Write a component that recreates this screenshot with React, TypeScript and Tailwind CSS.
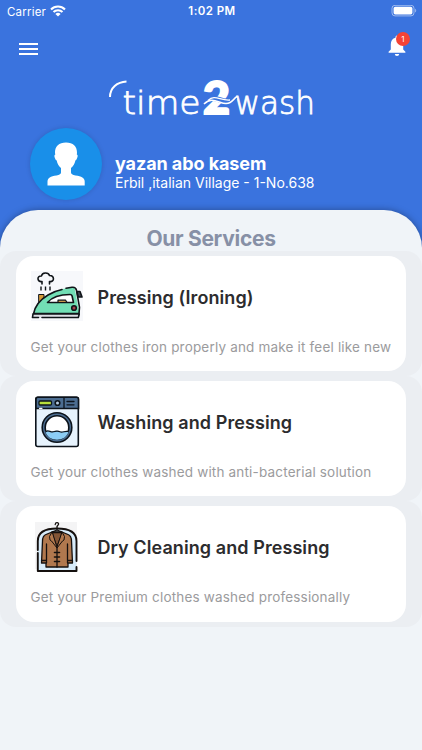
import React from 'react';

const WifiIcon: React.FC = () => (
  <svg className="w-4 h-3" viewBox="0 0 16 12" fill="none" stroke="white" strokeWidth="2.1">
    <path d="M1 4.4a10 10 0 0 1 14 0" />
    <path d="M3.5 7.1a6.4 6.4 0 0 1 9 0" />
    <path d="M8 11.6 5.4 9a3.7 3.7 0 0 1 5.2 0z" fill="white" stroke="none" />
  </svg>
);

const BatteryIcon: React.FC = () => (
  <svg className="w-[26px] h-3" viewBox="0 0 26 12">
    <rect x="1" y="0.3" width="22" height="10.6" rx="3" fill="none" stroke="white" strokeOpacity="0.5" />
    <rect x="2.6" y="1.8" width="18.8" height="7.6" rx="1.7" fill="white" />
    <path d="M24.1 3.7c1.5.7 1.5 3.1 0 3.8z" fill="white" fillOpacity="0.5" />
  </svg>
);

const BellIcon: React.FC = () => (
  <svg className="w-[18px] h-[21px]" viewBox="0 0 18 21" fill="white">
    <path d="M9 21a2.2 2.2 0 0 0 2.2-2.1H6.8A2.2 2.2 0 0 0 9 21zM15.2 14.6V9.2c0-3.3-1.7-5.8-4.7-6.5V2A1.5 1.5 0 0 0 7.5 2v.7C4.5 3.4 2.8 5.9 2.8 9.2v5.4L.6 16.8v1h16.8v-1z" />
  </svg>
);

const Logo: React.FC = () => (
  <svg className="w-[212px] h-[58px] overflow-visible" viewBox="105 68 212 58" fill="white">
    <path d="M110 97C110 88 117 82 126.5 81.500" fill="none" stroke="white" strokeWidth="2" />
    <text x="122.500" y="113.500" fontSize="32" textLength="78" lengthAdjust="spacingAndGlyphs" className="font-['DejaVu_Sans_Light','DejaVu_Sans',sans-serif] font-extralight" stroke="white" strokeWidth="0.8">time</text>
    <text x="203" y="113.500" fontSize="45" textLength="27" lengthAdjust="spacingAndGlyphs" className="font-[Lato,sans-serif] font-black" stroke="white" strokeWidth="2">2</text>
    <text x="234.500" y="113.500" fontSize="32" textLength="80.500" lengthAdjust="spacingAndGlyphs" className="font-['DejaVu_Sans_Light','DejaVu_Sans',sans-serif] font-extralight" stroke="white" strokeWidth="0.8">wash</text>
    <path d="M204 102.500C212 94 219 101 226 101.500S233 98 236 96.500" fill="none" stroke="#3a73de" strokeWidth="5.500" />
    <path d="M204 104C212 96 219 103.500 226 103.500S233 98.500 237 96.500" fill="none" stroke="white" strokeWidth="1.600" />
    <path d="M208 100.500C215 94 220 101 230 100" fill="none" stroke="white" strokeWidth="1.300" />
  </svg>
);

const AvatarIcon: React.FC = () => (
  <svg className="w-[38px] h-[44px]" viewBox="0 0 38 44" fill="white">
    <path d="M19 .5c7 0 11.200 4 11 10.500l-.2 1.600c1.200.3 1.200 2-.1 4.400-.5 1-.9 1.300-1.300 1.500-.7 3.300-2 5.600-4.400 7.500v4.600c0 1.700 1.400 2.300 4.500 2.800 6 .8 9.200 2.300 9.200 6.100v4H.5v-4c0-3.800 3-5.300 9-6.100 3.200-.5 4.500-1.100 4.500-2.800V26c-2.300-1.900-3.700-4.200-4.300-7.500-.5-.2-.9-.5-1.400-1.500-1.200-2.400-1.200-4.100 0-4.400L8 11C7.800 4.500 12 .5 19 .5z" />
  </svg>
);

const IronIcon: React.FC = () => (
  <svg className="w-[52px] h-[50px]" viewBox="0 0 52 50" fill="none" stroke="#101418" strokeWidth="1.600" strokeLinecap="round" strokeLinejoin="round">
    <rect width="52" height="50" fill="#f7f8fb" stroke="none" />
    <path d="M11 13V10.500C6 11.500 5.500 4.500 10.500 5 11 1 17.500 1 18.500 4.500 23.500 4 24 11.500 18.500 10.500V13" />
    <path d="M10 15.500v4M14.500 15.500v4M19 15.500v4" strokeLinecap="butt" strokeWidth="1.400" />
    <path d="M8 23.500h5v4.500l-5 4z" fill="#d59a38" strokeWidth="1" />
    <path d="M46 20.500h3l2 5.500h-4z" fill="#454b56" />
    <path d="M2.500 43C4 34 9.500 28.500 17 24c8-4.500 17-7.500 26.500-7.500l5 26.500z" fill="#72dfb5" stroke="none" />
    <path d="M2.500 43C4 34 9.500 28.500 17 24c4.500-2.700 9-4.500 14-5.500M35 17.200l6-.9c2.500-.3 4 .7 4.500 3l3 17-.5 6.200H2.500" />
    <path d="M16.500 31.500c5-6 11.500-8 22.500-8 1.500 0 2 .7 2.200 2l1.300 6z" fill="white" />
    <path d="M27 31.500v-2.300h7.500l1.500 2.300z" fill="#c99448" strokeWidth="1.200" />
    <circle cx="43" cy="37" r="2.300" fill="#a7424b" />
    <path d="M2 43h46l-1 3.500H1.500z" fill="#dedee5" stroke="none" />
    <path d="M2 43h46.300l-1 3.500H11M2 43l-.5 3.500h6" />
  </svg>
);

const WasherIcon: React.FC = () => (
  <svg className="w-[52px] h-[52px]" viewBox="0 0 52 52" fill="none" stroke="#0c131b" strokeWidth="1.600" strokeLinecap="round">
    <rect x="4.800" y="1.300" width="42.500" height="49.200" rx="2" fill="#e7f3fd" />
    <path d="M5 12.500V3.300q0-2 2-2h38.500q2 0 2 2v9.200z" fill="#4c6d91" />
    <path d="M33 2v10M36 5.500h7M36 8.800h7" strokeWidth="1.300" />
    <rect x="8" y="5" width="12.500" height="4" rx="1" fill="#b7df3c" strokeWidth="1.300" />
    <circle cx="26.500" cy="7" r="2.300" fill="#b5cbe2" />
    <circle cx="26" cy="31.500" r="14.800" fill="#4c6d91" />
    <circle cx="26" cy="31.500" r="11.800" fill="white" />
    <path d="M14.500 35.500c3-2 4 1 7 0s5-1 7 0 5-1 9 0C35 46.500 17 46.500 14.500 35.500z" fill="#8ccdf5" stroke="none" />
    <path d="M15 35.500c2.500-2 4.500 1 7 .3s4.500-1.300 7 0 5-1.300 8-.3" strokeWidth="1.200" />
    <path d="M8.500 12.300h2.500" stroke="white" strokeWidth="1.200" />
  </svg>
);

const CoatIcon: React.FC = () => (
  <svg className="w-[52px] h-[52px]" viewBox="0 0 52 52" fill="none" stroke="#15100e" strokeWidth="1.300" strokeLinecap="round" strokeLinejoin="round">
    <rect x="4" y="1" width="42" height="47" fill="#f4f4f5" stroke="none" />
    <path d="M6.800 50V20C6.800 11 14 7.500 26 7.500S45.500 11 45.500 20v30z" fill="#d7ebf9" stroke="none" />
    <path d="M6.800 32V50h38.700v-4M45.500 40V20C45.500 11 38 7.500 26 7.500S6.800 11 6.800 20v9" strokeWidth="1.900" />
    <path d="M21 11 15 13.500q-3.500 1.500-3.500 6.500L10.500 42h4.500v4h22v-4h4.500L40.500 20q0-5-3.500-6.500L31 11z" fill="#b0784e" />
    <path d="M15.500 42V23M36.500 42V23M10.500 39.500h5M36.500 39.500h5" />
    <path d="M21.500 11.500v3l4.500 11 4.500-11v-3z" fill="#835536" />
    <path d="m21 11-2.500 4.500.5 3.500 1.500 1 5.500 7 5.500-7 1.500-1 .5-3.500L31 11l-5 15z" fill="#b0784e" strokeWidth="1" />
    <path d="M26 27v19" />
    <path d="M23.500 31.500h5M23.500 36h5M23.500 40.500h5" strokeWidth="1.600" />
    <path d="M24.200 3.500q.3-2 2-1.800 2.300.5.800 2.500l-1 1.300V9l-5 2.200M26 9l5 2.200" />
  </svg>
);

const services = [
  { title: 'Pressing (Ironing)', desc: 'Get your clothes iron properly and make it feel like new', icon: <IronIcon /> },
  { title: 'Washing and Pressing', desc: 'Get your clothes washed with anti-bacterial solution', icon: <WasherIcon /> },
  { title: 'Dry Cleaning and Pressing', desc: 'Get your Premium clothes washed professionally', icon: <CoatIcon /> },
];

const App: React.FC = () => {
  return (
    <div className="h-[750px] w-[422px] overflow-hidden bg-[#f0f4f8] font-[Inter,sans-serif]">
      <header className="h-[250px] bg-[#3a73de] text-white">
        <div className="grid h-[22px] grid-cols-3 items-center pl-[7px] pr-[5px]">
          <div className="flex items-center gap-1 text-[11.5px] leading-4 tracking-[0.2px]">
            <span className="pt-px">Carrier</span>
            <WifiIcon />
          </div>
          <span className="text-center text-[11.5px] font-semibold leading-4 tracking-[0.45px]">1:02 PM</span>
          <div className="flex justify-end">
            <BatteryIcon />
          </div>
        </div>

        <div className="flex h-[46px] items-start justify-between pl-[19px] pr-[16px] pt-[13px]">
          <button className="mt-[8px] flex w-[19px] flex-col gap-[3px]" aria-label="Menu">
            <span className="h-[2px] bg-white"></span>
            <span className="h-[2px] bg-white"></span>
            <span className="h-[2px] bg-white"></span>
          </button>
          <button className="relative" aria-label="Notifications">
            <BellIcon />
            <span className="absolute -right-[4px] -top-[3px] flex h-[14px] w-[14px] items-center justify-center rounded-full bg-[#f44336] text-[8px]">1</span>
          </button>
        </div>

        <div className="flex justify-center">
          <Logo />
        </div>

        <div className="mt-[2px] flex items-start pl-[30px]">
          <div className="flex h-[72px] w-[72px] items-center justify-center rounded-full bg-[#198fe9] shadow-[0_0_5px_rgba(0,0,0,0.15)]">
            <AvatarIcon />
          </div>
          <div className="ml-[13px] mt-[25px]">
            <h1 className="text-[18px] font-bold leading-[22px] tracking-[-0.08px]">yazan abo kasem</h1>
            <p className="text-sm leading-4">Erbil ,italian Village - 1-No.638</p>
          </div>
        </div>
      </header>

      <main className="relative -mt-10 h-[540px] rounded-t-[38px] bg-[#f0f4f8] shadow-[0_0_7px_rgba(0,0,0,0.35)]">
        <h2 className="h-[41px] pt-[15px] text-center text-[21px] font-bold leading-7 tracking-[-0.3px] text-[#8790a6]">Our Services</h2>
        {services.map((item) => (
          <section key={item.title} className="h-[125.200px] rounded-2xl bg-[#ebeef2] pl-[15.500px] pr-[16px] py-[5px]">
            <div className="h-[115.200px] rounded-[18px] bg-white px-[15px] pt-[14px]">
              <div className="flex h-[54px] items-center">
                <div className="flex h-[52px] w-[52px] items-start">{item.icon}</div>
                <h3 className="ml-[15px] text-[18px] font-semibold tracking-[0.080px] text-[#2c2c2e]">{item.title}</h3>
              </div>
              <p className="mt-[13px] whitespace-nowrap text-[13.5px] leading-5 tracking-[0.18px] text-[#9b9b9d]">{item.desc}</p>
            </div>
          </section>
        ))}
      </main>
    </div>
  );
};

export default App;
